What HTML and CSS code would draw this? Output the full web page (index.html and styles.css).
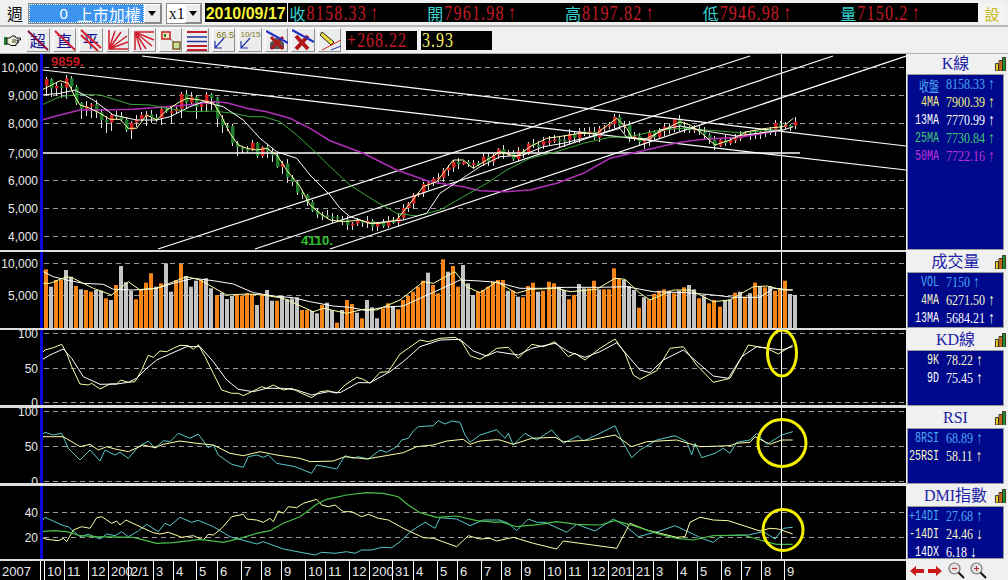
FILE: index.html
```html
<!DOCTYPE html>
<html lang="zh-Hant">
<head>
<meta charset="utf-8">
<title>上市加權 週線</title>
<link rel="stylesheet" href="styles.css">
</head>
<body>
<div class="app">
  <header class="row-quote">
    <button class="btn-period">週</button>
    <div class="combo combo-stock"><span class="combo-field"><span class="stock-no">0</span>上市加權</span><span class="combo-drop"><i class="tri"></i></span></div>
    <div class="combo combo-scale"><span class="combo-field">x1</span><span class="combo-drop"><i class="tri"></i></span></div>
    <div class="date-box">2010/09/17</div>
    <div class="quote-strip">
      <div class="quote"><span class="q-label">收</span><span class="q-num">8158.33</span><span class="q-up">↑</span></div>
      <div class="quote"><span class="q-label">開</span><span class="q-num">7961.98</span><span class="q-up">↑</span></div>
      <div class="quote"><span class="q-label">高</span><span class="q-num">8197.82</span><span class="q-up">↑</span></div>
      <div class="quote"><span class="q-label">低</span><span class="q-num">7946.98</span><span class="q-up">↑</span></div>
      <div class="quote"><span class="q-label">量</span><span class="q-num">7150.2</span><span class="q-up">↑</span></div>
    </div>
    <button class="btn-set">設</button>
  </header>

  <nav class="row-tools">
    <svg class="hand" viewBox="0 0 17 12"><path d="M0 2h3v8H0z" fill="#1f7a2a"/><path d="M3 3h3l2-2h3l1 2h4.500v2H13v1h1.500v1.500H13V9h-1v1.500H6.500L5 9H3z" fill="#f2f2d8" stroke="#111" stroke-width="1"/><path d="M8 5h4M8 7h4" stroke="#111" stroke-width=".8"/></svg>
    <div class="tool-group">
      <button class="tool"><span class="tool-char c-navy">超</span><svg viewBox="0 0 22 22"><path d="M1 2 21 21" stroke="#8a1040" stroke-width="2"/></svg></button>
      <button class="tool"><span class="tool-char c-navy">直</span><svg viewBox="0 0 22 22"><path d="M1 2 21 21" stroke="#d02030" stroke-width="2"/></svg></button>
      <button class="tool"><span class="tool-char c-navy">平</span><svg viewBox="0 0 22 22"><path d="M1 1 21 19M1 6 18 22" stroke="#d02030" stroke-width="2"/></svg></button>
      <button class="tool"><svg viewBox="0 0 22 22"><path d="M2 1V20H21M2 20 8 2M2 20 14 3M2 20 20 7M2 20 21 13" stroke="#d02030" stroke-width="1.5" fill="none"/></svg></button>
      <button class="tool"><svg viewBox="0 0 22 22"><path d="M2 21V3H21M2 3 8 21M2 3 13 20M2 3 19 17M2 3 21 11" stroke="#d02030" stroke-width="1.5" fill="none"/></svg></button>
      <button class="tool"><svg viewBox="0 0 22 22"><path d="M8 8 16 15" stroke="#3030a0" stroke-dasharray="2 1"/><rect x="2" y="3" width="8" height="7" fill="#f4e8c0" stroke="#c02020" stroke-width="1.5"/><rect x="4" y="5" width="2" height="3" fill="#208030"/><rect x="13" y="13" width="7" height="7" fill="#c8e0a0" stroke="#806020" stroke-width="1.5"/></svg></button>
      <button class="tool"><svg viewBox="0 0 22 22"><path d="M1 3H21M1 17H21" stroke="#c02030" stroke-width="2"/><path d="M1 8H21M1 12.500H21" stroke="#2030a0" stroke-width="1.500"/><path d="M1 21H21" stroke="#c02030" stroke-width="2"/></svg></button>
      <button class="tool"><span class="tool-note tool-note-lg">66.5</span><svg viewBox="0 0 22 22"><path d="M11 9 2 19M2 12V19H9" stroke="#2030b0" stroke-width="1.200" fill="none"/></svg></button>
      <button class="tool"><span class="tool-note">10/15</span><svg viewBox="0 0 22 22"><path d="M11 9 2 19M2 12V19H9" stroke="#2030b0" stroke-width="1.200" fill="none"/></svg></button>
      <button class="tool"><svg viewBox="0 0 22 22"><path d="M4 14 11 8l7 6v6H4z" fill="#555"/><path d="M5 8 17 20M17 8 5 20" stroke="#b01818" stroke-width="3"/><path d="M0 2 22 14" stroke="#2030c0" stroke-width="2"/></svg></button>
      <button class="tool"><svg viewBox="0 0 22 22"><path d="M4 7 16 20M16 7 4 20" stroke="#b01818" stroke-width="4"/><path d="M0 1 22 13" stroke="#2030c0" stroke-width="2"/></svg></button>
      <button class="tool"><svg viewBox="0 0 22 22"><path d="M3 3 15 13l-3 3L1 6z" fill="#f0e040" stroke="#222"/><path d="M3 21 22 11" stroke="#d02020"/><path d="M12 21 22 17" stroke="#2030c0"/></svg></button>
    </div>
    <div class="stat-box stat-change"><span class="stat-num">+268.22</span></div>
    <div class="stat-box stat-pct"><span class="stat-num">3.93</span></div>
  </nav>

  <main class="panes">
    <section class="pane pane-main">
      <svg class="chart" id="chart-main" viewBox="0 54 906 196"></svg>
      <aside class="side">
        <div class="side-head">K線<svg class="mini-bars" viewBox="0 0 11 14"><path d="M.5 6.500h3V14h-3zM4 3.500h3V14H4zM7.500.5h3V14h-3z" stroke="#111" stroke-width=".8" fill="#e8c828"/><path d="M8 1h2v13H8z" fill="#20902a"/><path d="M4.500 4h2v10h-2z" fill="#d06018"/></svg></div>
        <div class="side-box">
          <div class="val c-sky"><span class="val-name">收盤</span><span class="val-num">8158.33</span><span class="val-arrow">↑</span></div>
          <div class="val c-yellow"><span class="val-name">4MA</span><span class="val-num">7900.39</span><span class="val-arrow">↑</span></div>
          <div class="val c-white"><span class="val-name">13MA</span><span class="val-num">7770.99</span><span class="val-arrow">↑</span></div>
          <div class="val c-green"><span class="val-name">25MA</span><span class="val-num">7730.84</span><span class="val-arrow">↑</span></div>
          <div class="val c-purple"><span class="val-name">50MA</span><span class="val-num">7722.16</span><span class="val-arrow">↑</span></div>
        </div>
      </aside>
    </section>

    <section class="pane pane-vol">
      <svg class="chart" id="chart-vol" viewBox="0 252 906 76"></svg>
      <aside class="side">
        <div class="side-head">成交量<svg class="mini-bars" viewBox="0 0 11 14"><path d="M.5 6.500h3V14h-3zM4 3.500h3V14H4zM7.500.5h3V14h-3z" stroke="#111" stroke-width=".8" fill="#e8c828"/><path d="M8 1h2v13H8z" fill="#20902a"/><path d="M4.500 4h2v10h-2z" fill="#d06018"/></svg></div>
        <div class="side-box">
          <div class="val c-sky"><span class="val-name">VOL</span><span class="val-num">7150</span><span class="val-arrow">↑</span></div>
          <div class="val c-pale"><span class="val-name">4MA</span><span class="val-num">6271.50</span><span class="val-arrow">↑</span></div>
          <div class="val c-white"><span class="val-name">13MA</span><span class="val-num">5684.21</span><span class="val-arrow">↑</span></div>
        </div>
      </aside>
    </section>

    <section class="pane pane-kd">
      <svg class="chart" id="chart-kd" viewBox="0 330 906 75"></svg>
      <aside class="side">
        <div class="side-head">KD線<svg class="mini-bars" viewBox="0 0 11 14"><path d="M.5 6.500h3V14h-3zM4 3.500h3V14H4zM7.500.5h3V14h-3z" stroke="#111" stroke-width=".8" fill="#e8c828"/><path d="M8 1h2v13H8z" fill="#20902a"/><path d="M4.500 4h2v10h-2z" fill="#d06018"/></svg></div>
        <div class="side-box">
          <div class="val c-pale"><span class="val-name">9K</span><span class="val-num">78.22</span><span class="val-arrow">↑</span></div>
          <div class="val c-white"><span class="val-name">9D</span><span class="val-num">75.45</span><span class="val-arrow">↑</span></div>
        </div>
      </aside>
    </section>

    <section class="pane pane-rsi">
      <svg class="chart" id="chart-rsi" viewBox="0 408 906 75"></svg>
      <aside class="side">
        <div class="side-head">RSI<svg class="mini-bars" viewBox="0 0 11 14"><path d="M.5 6.500h3V14h-3zM4 3.500h3V14H4zM7.500.5h3V14h-3z" stroke="#111" stroke-width=".8" fill="#e8c828"/><path d="M8 1h2v13H8z" fill="#20902a"/><path d="M4.500 4h2v10h-2z" fill="#d06018"/></svg></div>
        <div class="side-box">
          <div class="val c-sky"><span class="val-name">8RSI</span><span class="val-num">68.89</span><span class="val-arrow">↑</span></div>
          <div class="val c-pale"><span class="val-name">25RSI</span><span class="val-num">58.11</span><span class="val-arrow">↑</span></div>
        </div>
      </aside>
    </section>

    <section class="pane pane-dmi">
      <svg class="chart" id="chart-dmi" viewBox="0 486 906 73"></svg>
      <aside class="side">
        <div class="side-head">DMI指數<svg class="mini-bars" viewBox="0 0 11 14"><path d="M.5 6.500h3V14h-3zM4 3.500h3V14H4zM7.500.5h3V14h-3z" stroke="#111" stroke-width=".8" fill="#e8c828"/><path d="M8 1h2v13H8z" fill="#20902a"/><path d="M4.500 4h2v10h-2z" fill="#d06018"/></svg></div>
        <div class="side-box">
          <div class="val c-sky"><span class="val-name">+14DI</span><span class="val-num">27.68</span><span class="val-arrow">↑</span></div>
          <div class="val c-pale"><span class="val-name">-14DI</span><span class="val-num">24.46</span><span class="val-arrow">↓</span></div>
          <div class="val c-white"><span class="val-name">14DX</span><span class="val-num">6.18</span><span class="val-arrow">↓</span></div>
        </div>
      </aside>
    </section>

    <footer class="pane pane-axis">
      <svg class="axis" id="chart-axis" viewBox="0 561 906 19"></svg>
      <div class="nav-icons">
        <svg viewBox="0 0 14 10" class="nav-arrow"><path d="M0 5 6 0v3h8v4H6v3z" fill="#c81818"/></svg>
        <svg viewBox="0 0 14 10" class="nav-arrow"><path d="M14 5 8 0v3H0v4h8v3z" fill="#c81818"/></svg>
        <svg viewBox="0 0 17 17" class="nav-zoom"><circle cx="6.500" cy="6.500" r="5.500" fill="#e8e0e0" stroke="#777" stroke-width="1.200"/><path d="M4 6.500H9" stroke="#b03030" stroke-width="1.200"/><path d="M10.500 10.500 16 16" stroke="#111" stroke-width="2"/></svg>
        <svg viewBox="0 0 17 17" class="nav-zoom"><circle cx="6.500" cy="6.500" r="5.500" fill="#e8e0e0" stroke="#777" stroke-width="1.200"/><path d="M4 6.500H9M6.500 4V9" stroke="#b03030" stroke-width="1.200"/><path d="M10.500 10.500 16 16" stroke="#111" stroke-width="2"/></svg>
      </div>
    </footer>
  </main>
</div>
<script src="chart.js"></script>
</body>
</html>
```
FILE: styles.css
```css
* { box-sizing: border-box; }
html, body { margin: 0; padding: 0; }
body { width: 1008px; height: 580px; overflow: hidden; background: #f0f0f0; font-family: "Liberation Serif", "Noto Sans CJK TC", serif; }
button { font: inherit; padding: 0; margin: 0; }
.app { display: flex; flex-direction: column; width: 1008px; height: 580px; }

/* quote row */
.row-quote { display: flex; align-items: stretch; height: 27px; padding: 3px 3px 3px 5px; border-bottom: 2px solid #b8b8b8; }
.btn-period { width: 20px; background: #f0f0f0; border: 0; font-family: "Noto Sans CJK TC", sans-serif; font-size: 16px; line-height: 18px; color: #111; }
.combo { display: flex; height: 21px; border: 1px solid #8a8a8a; background: #fff; }
.combo-stock { width: 134px; margin-left: 3px; }
.combo-scale { width: 36px; margin-left: 4px; }
.combo-field { flex: 1; display: flex; align-items: center; font-family: "Noto Sans CJK TC", sans-serif; font-size: 16px; line-height: 18px; }
.combo-stock .combo-field { background: #3c94ee; color: #fff; outline: 1px dotted #fff; outline-offset: -1px; justify-content: flex-end; padding-right: 3px; }
.combo-scale .combo-field { font-family: "Liberation Serif", serif; padding-left: 2px; color: #111; }
.stock-no { margin-right: 9px; font-family: "Liberation Sans", sans-serif; font-size: 15px; }
.combo-drop { display: flex; align-items: center; justify-content: center; width: 17px; background: #ececec; border: 1px solid; border-color: #fff #888 #888 #fff; }
.tri { width: 0; height: 0; border: 4px solid transparent; border-top: 5px solid #000; border-bottom: 0; }
.date-box { width: 82px; margin-left: 3px; background: #000; color: #f6f23a; font-family: "Liberation Sans", sans-serif; font-weight: 700; font-size: 16px; line-height: 21px; text-align: center; }
.quote-strip { display: grid; grid-template-columns: repeat(5, 137.700px); width: 691px; margin-left: 1px; padding-left: 2px; background: #000; }
.quote { display: flex; align-items: center; color: #c81c26; }
.q-label { width: 17px; color: #38d4d4; font-family: "Noto Sans CJK TC", sans-serif; font-size: 16px; line-height: 20px; }
.q-num { font-family: "Liberation Serif", serif; font-size: 16px; letter-spacing: 1.200px; transform: scaleY(1.300); }
.q-up { margin-left: 3px; font-size: 16px; font-family: "Liberation Serif", serif; transform: scaleY(1.300); }
.btn-set { width: 26px; margin-left: 1px; background: #f4f4f0; border: 0; color: #c8b820; font-family: "Noto Sans CJK TC", sans-serif; font-size: 15px; }

/* tools row */
.row-tools { display: flex; align-items: center; height: 27px; padding-left: 4px; border-bottom: 1px solid #b0b0b0; }
.hand { width: 17px; height: 12px; margin-top: 2px; }
.tool-group { display: flex; gap: 3px; margin-left: 5px; }
.tool { position: relative; width: 23.500px; height: 24px; background: #ececec; border: 1px solid; border-color: #fff #909090 #909090 #fff; }
.tool svg { position: absolute; left: 0; top: 0; width: 22px; height: 22px; }
.tool-char { display: block; font-family: "Noto Sans CJK TC", sans-serif; font-size: 16px; line-height: 22px; }
.c-navy { color: #15159a; }
.tool-note { position: absolute; right: 0; top: 1px; font-family: "Liberation Sans", sans-serif; font-size: 8px; color: #7a7a20; }
.tool-note-lg { font-size: 9px; }
.stat-box { display: flex; align-items: center; width: 71px; height: 19px; margin-left: 5px; background: #000; padding-left: 1px; font-family: "Liberation Serif", serif; font-size: 16px; letter-spacing: 1px; }
.stat-num { display: block; line-height: 15px; transform: scaleY(1.250); }
.stat-change { color: #c81c26; }
.stat-pct { color: #f4f060; margin-left: 4px; }

/* panes */
.panes { flex: 1; display: flex; flex-direction: column; min-height: 0; }
.pane { display: flex; width: 1008px; }
.pane-main { height: 198px; }
.pane-vol { height: 78px; }
.pane-kd { height: 78px; }
.pane-rsi { height: 78px; }
.pane-dmi { height: 75px; }
.pane-axis { height: 19px; }
.chart { display: block; flex: none; width: 906px; background: #000; border-bottom: 2px solid #dcdcdc; }
.pane-main .chart { height: 198px; }
.pane-vol .chart { height: 78px; }
.pane-kd .chart, .pane-rsi .chart { height: 78px; border-bottom-width: 3px; }
.pane-dmi .chart { height: 75px; }
.axis { display: block; flex: none; width: 906px; height: 19px; background: #000; }

.side { flex: 1; display: flex; flex-direction: column; padding: 0 4px 2px 1px; }
.side-head { position: relative; height: 20px; font-size: 16px; line-height: 20px; text-align: center; color: #2222a8; font-family: "Liberation Serif", "Noto Sans CJK TC", serif; }
.mini-bars { position: absolute; right: -2px; top: 3px; width: 11px; height: 14px; }
.side-box { flex: 1; background: #00088c; border: 1px solid #9a9a9a; min-height: 0; overflow: hidden; }
.val { display: flex; align-items: center; height: 18px; font-family: "Liberation Serif", "Noto Sans CJK TC", serif; font-size: 12px; }
.val-name { width: 31px; text-align: right; margin-right: 7px; white-space: nowrap; font-family: "Liberation Mono", "Noto Sans CJK TC", monospace; font-size: 10px; transform: scaleY(1.400); }
.val-num { transform: scaleY(1.250); }
.val-arrow { margin-left: 3px; font-size: 13px; transform: scaleY(1.250); }
.c-sky { color: #4aa8f4; }
.c-yellow { color: #f4f080; }
.c-pale { color: #f8f8c8; }
.c-white { color: #fff; }
.c-green { color: #40c870; }
.c-purple { color: #c030d8; }

.nav-icons { flex: 1; display: flex; align-items: center; padding-left: 4px; }
.nav-arrow { width: 14px; height: 10px; margin-right: 4px; }
.nav-zoom { width: 17px; height: 17px; margin-left: 2px; margin-right: 3px; }

/* chart marks */
.grid { stroke: #9a9a9a; stroke-width: 1; stroke-dasharray: 5 4; shape-rendering: crispEdges; }
.blue-rule { stroke: #0808d8; stroke-width: 3; shape-rendering: crispEdges; }
.cross { stroke: #fff; stroke-width: 1; shape-rendering: crispEdges; }
.trend { stroke: #fff; stroke-width: 1.200; fill: none; }
.solid-7000 { stroke: #fff; stroke-width: 1.500; }
.line { fill: none; stroke-width: 1; }
.l-yellow { stroke: #ffffa8; }
.l-white { stroke: #fff; }
.l-green { stroke: #3aa83a; }
.l-purple { stroke: #b030b8; stroke-width: 1.500; }
.l-cyan { stroke: #58c8c8; }
.l-dmi-green { stroke: #48c048; stroke-width: 1.200; }
.wick { stroke: #e0e0e0; stroke-width: 1; shape-rendering: crispEdges; }
.up { fill: #d81f20; }
.down { fill: #1f7d2c; }
.vol-o { fill: #f58518; }
.vol-g { fill: #c4c4c4; }
.ring { fill: none; stroke: #f4f000; stroke-width: 3; }
.y-label { fill: #e8e8e8; font-family: "Liberation Sans", sans-serif; font-size: 12px; text-anchor: end; }
.hi-label { fill: #c01c20; font-family: "Liberation Sans", sans-serif; font-weight: 700; font-size: 13px; }
.lo-label { fill: #30c030; font-family: "Liberation Sans", sans-serif; font-weight: 700; font-size: 13px; }
.x-label { fill: #e8e8e8; font-family: "Liberation Sans", sans-serif; font-size: 13px; }
.x-tick { stroke: #fff; stroke-width: 1; shape-rendering: crispEdges; }
```
FILE: chart.js
```js
(function () {
var NS = "http://www.w3.org/2000/svg";
function el(parent, tag, cls, attrs) {
  var e = document.createElementNS(NS, tag);
  if (cls) e.setAttribute("class", cls);
  for (var k in attrs) e.setAttribute(k, attrs[k]);
  parent.appendChild(e);
  return e;
}
function tr(ox, oy, a) { // traced crop coordinates (3x) to page coordinates
  var out = [];
  for (var i = 0; i < a.length; i += 2) out.push([ox + a[i] / 3, oy + a[i + 1] / 3]);
  return out;
}
function poly(svg, cls, pts) {
  el(svg, "polyline", "line " + cls, { points: pts.map(function (p) { return p[0].toFixed(1) + "," + p[1].toFixed(1); }).join(" ") });
}
function frame(id, grid, labels) {
  var svg = document.getElementById(id);
  grid.forEach(function (y) { el(svg, "line", "grid", { x1: 44, x2: 906, y1: y + .5, y2: y + .5 }); });
  labels.forEach(function (l) {
    var t = el(svg, "text", "y-label", { x: 38, y: l[1] + 4.5 });
    t.textContent = l[0];
  });
  return svg;
}
function finish(svg, y1, y2) {
  el(svg, "line", "blue-rule", { x1: 41.5, x2: 41.5, y1: y1, y2: y2 });
  el(svg, "line", "cross", { x1: 781.5, x2: 781.5, y1: y1, y2: y2 });
}

/* ---------- price pane ---------- */
var m = frame("chart-main", [67, 95, 123, 180, 208, 236],
  [["10,000", 67], ["9,000", 95], ["8,000", 123], ["7,000", 153], ["6,000", 180], ["5,000", 208], ["4,000", 236]]);

var ma4 = tr(0, 50, [125,120,155,105,180,92,205,100,225,140,240,165,270,175,300,190,330,208,360,208,385,235,410,235,440,195,470,210,500,180,540,155,560,145,600,150,640,158,665,200,690,250,715,285,740,295,770,300,800,295,830,315,860,360,900,410,930,465,960,490,990,510])
  .concat(tr(330, 50, [40,515,90,510,120,520,150,520,200,510,240,460,280,410,320,395,370,330,400,330,430,355,470,330,510,305,560,320,600,290,650,265,700,258,750,250,800,250,860,205,890,235,905,262,940,270,990,245]))
  .concat(tr(660, 50, [60,215,90,225,120,245,165,285,210,270,260,245,320,235,370,230,400,205]));
var ma13 = tr(0, 50, [125,135,180,130,225,120,280,150,340,195,410,210,470,210,510,200,570,170,610,155,670,170,730,210,780,265,830,305,890,325,930,375,990,435])
  .concat(tr(330, 50, [30,475,60,500,120,520,220,510,290,490,330,430,390,390,450,350,510,320,580,315,640,290,700,280,800,255,870,235,890,262,960,268,990,240]))
  .concat(tr(660, 50, [60,228,130,242,230,258,370,240,400,230]));
var ma25 = tr(0, 50, [125,165,180,140,240,133,300,135,350,150,390,163,450,165,500,175,570,185,640,183,700,190,750,200,790,200,840,215,890,255,950,310,990,350])
  .concat(tr(330, 50, [60,405,130,450,200,490,260,498,330,480,400,440,470,400,530,360,600,325,680,305,760,280,840,262,900,260,990,240]))
  .concat(tr(660, 50, [70,235,140,240,240,248,370,238]));
var ma50 = tr(0, 50, [125,210,180,195,240,180,300,180,400,178,480,172,560,165,640,155,680,158,740,175,800,185,870,205,930,235,990,272])
  .concat(tr(330, 50, [100,310,200,360,300,395,400,410,450,422,530,425,600,420,680,400,760,370,840,325,990,290]))
  .concat(tr(660, 50, [60,277,130,268,240,262,370,240]));

function at(pts, x) {
  for (var i = 1; i < pts.length; i++) {
    if (x <= pts[i][0]) {
      var a = pts[i - 1], b = pts[i];
      return a[1] + (b[1] - a[1]) * (x - a[0]) / (b[0] - a[0] || 1);
    }
  }
  return pts[pts.length - 1][1];
}
var seed = 17;
function rnd() { seed = (seed * 16807) % 2147483647; return seed / 2147483647; }

var STEP = 5.03, X0 = 43.5, prevY = at(ma4, 50);
for (var i = 0; i < 150; i++) {
  var cx = X0 + STEP * i;
  var spread = cx < 300 ? 15 : 9;
  var closeY = at(ma4, Math.min(cx + 5, 786)) + (rnd() - .5) * spread;
  var bodyTop = Math.min(prevY, closeY), bodyH = Math.max(Math.abs(closeY - prevY), 2);
  el(m, "line", "wick", { x1: Math.round(cx) + 2.5, x2: Math.round(cx) + 2.5, y1: bodyTop - 1 - rnd() * 4, y2: bodyTop + bodyH + 1 + rnd() * (cx < 300 ? 11 : 5) });
  el(m, "rect", closeY < prevY ? "up" : "down", { x: Math.round(cx) + 1, y: bodyTop, width: 3.5, height: bodyH });
  prevY = closeY;
}
[[142, 56, 906, 146], [43, 70, 906, 170], [158, 249, 750, 56], [255, 249, 833, 56], [330, 249, 906, 56]].forEach(function (l) {
  el(m, "line", "trend", { x1: l[0], y1: l[1], x2: l[2], y2: l[3] });
});
el(m, "line", "trend solid-7000", { x1: 43, y1: 153, x2: 800, y2: 153 });
poly(m, "l-purple", ma50);
poly(m, "l-green", ma25);
poly(m, "l-white", ma13);
poly(m, "l-yellow", ma4);
el(m, "text", "hi-label", { x: 51, y: 66 }).textContent = "9859.";
el(m, "text", "lo-label", { x: 301, y: 245 }).textContent = "4110.";
finish(m, 54, 250);

/* ---------- volume pane ---------- */
var v = frame("chart-vol", [263, 295], [["10,000", 263], ["5,000", 295]]);
var bars = "o58 g110 o90 o90 g60 g80 o108 g118 o120 o125 g120 g122 o145 g150 o105 g48 g97 g122 o148 o120 o98 o70 g110 o100 g40 g125 o90 o42 g78 g110 g92 o90 g85 g115 o135 g128 g147 g138 o135 o137 o130 o132 g165 o135 g120 g152 o152 g138 g148 g145 g142 o180 o180 g183 g190 o165 g158 g180 o218 g180 o150 o162 g188 o205 g150 g172 g205 o175 o160 g168 o178 o150 o138 o125 o110 o92 g68 o105 o130 o28 g65 o48 o110 g45 g100 g135 o125 o120 o110 o95 o90 o90 g122 o122 g140 o142 o108 o98 g125 o122 o95 o100 g110 g120 o148 o135 g102 g115 o115 o92 g118 o118 o118 o55 o85 g90 g108 g120 o173 g142 o148 o132 o122 o118 g122 o130 g122 o112 g105 g118 o145 g140 o160 o150 o170 g150 g148 o128 g125 o140 g130 o98 g108 o112 g108 o122 o115 o92 g132 g135".split(" ");
bars.forEach(function (b, i) {
  var y = 250 + parseInt(b.slice(1), 10) / 3;
  el(v, "rect", b[0] === "o" ? "vol-o" : "vol-g", { x: Math.round(X0 + STEP * i), y: y.toFixed(1), width: 4, height: (328 - y).toFixed(1) });
});
poly(v, "l-white", tr(0, 250, [130,65,160,80,200,90,250,100,310,103,340,118,400,120,470,115,520,100,580,85,640,92,700,102,760,128,820,138,880,143,930,155,1000,168,1050,172,1100,182,1150,172,1210,168,1260,145,1320,118,1380,90,1440,93,1490,97])
  .concat(tr(500, 250, [60,115,130,115,200,112,300,112,380,110,460,125,560,128,640,135,700,142,780,142,820,115,878,120])));
poly(v, "l-yellow", tr(0, 250, [130,100,150,100,200,80,220,85,280,115,335,135,385,95,420,120,470,115,560,80,600,90,680,135,740,132,790,135,850,145,940,185,970,175,1040,190,1090,178,1130,180,1200,150,1270,95,1300,100,1365,65,1400,110,1440,128,1490,95])
  .concat(tr(500, 250, [50,130,90,118,170,115,210,125,290,118,345,85,375,88,420,130,450,150,520,120,570,120,640,155,690,150,760,110,800,108,850,120,878,120])));
finish(v, 252, 328);

/* ---------- KD pane ---------- */
var kd = frame("chart-kd", [333, 368, 402], [["100", 333], ["50", 368], ["0", 402]]);
poly(kd, "l-yellow", tr(0, 250, [125,310,135,300,160,293,185,283,200,310,215,350,240,402,265,405,275,400,300,417,330,402,350,402,362,390,385,397,405,395,425,360,445,316,460,322,480,303,500,305,520,295,540,286,565,287,580,298,595,284,615,320,640,370,665,420,695,430,715,430,730,437,755,425,785,410,800,415,820,405,850,420,875,415,905,430,935,443,960,425,985,422,1010,430,1035,405,1070,382,1090,388,1110,400,1140,367,1165,365,1200,312,1225,295,1260,270,1285,275,1320,265,1365,262,1385,275,1410,317,1440,328,1470,310,1490,295])
  .concat(tr(500, 250, [25,292,55,325,95,283,130,290,165,275,205,320,225,310,255,330,300,295,345,267,375,310,400,375,420,388,470,362,510,295,550,290,590,345,640,397,690,385,745,285,800,295,835,312,878,285])));
poly(kd, "l-white", tr(0, 250, [125,330,150,315,190,297,215,325,250,380,300,403,350,402,385,397,410,385,440,355,470,330,510,312,560,290,600,290,640,335,680,390,715,418,760,425,800,415,850,415,890,420,935,435,985,425,1020,428,1075,398,1110,398,1170,365,1210,335,1260,290,1320,270,1380,268,1420,303,1460,318,1490,305])
  .concat(tr(500, 250, [55,315,95,295,165,280,205,305,255,322,300,305,350,278,420,360,450,368,490,330,550,300,590,335,640,378,685,385,725,320,770,290,845,300,878,290])));
finish(kd, 330, 405);
el(kd, "ellipse", "ring", { cx: 782, cy: 353, rx: 14.5, ry: 23 });

/* ---------- RSI pane ---------- */
var rsi = frame("chart-rsi", [411, 446, 481], [["100", 411], ["50", 446], ["0", 481]]);
poly(rsi, "l-cyan", tr(0, 405, [125,90,135,82,160,90,185,85,205,130,240,165,270,135,300,168,315,135,345,150,360,142,385,160,415,125,445,108,465,130,490,107,510,110,535,85,570,100,595,87,625,128,640,120,655,150,695,178,730,187,745,155,770,150,790,157,805,150,830,175,885,185,935,205,950,180,1010,192,1035,152,1060,160,1075,155,1105,162,1140,135,1160,142,1190,125,1205,105,1225,100,1240,78,1255,65,1300,62,1315,47,1335,57,1355,48,1380,52,1395,90,1410,112,1440,90,1490,74])
  .concat(tr(500, 405, [0,85,15,100,25,85,40,120,75,85,110,105,155,75,190,115,235,92,250,108,300,85,345,62,365,105,395,158,420,135,470,105,525,92,560,110,575,150,585,115,605,158,645,145,670,130,690,145,710,112,750,105,770,85,800,118,845,90,878,80])));
poly(rsi, "l-yellow", tr(0, 405, [125,95,160,95,190,95,240,125,270,118,295,135,320,125,345,132,385,140,430,120,465,128,490,118,540,108,590,115,640,120,690,145,730,152,780,140,830,150,900,160,930,170,1000,168,1035,155,1100,162,1140,155,1210,143,1250,125,1300,120,1340,108,1390,103,1410,118,1440,108,1490,104])
  .concat(tr(500, 405, [0,105,40,118,95,100,165,97,190,110,270,105,345,90,395,125,440,110,530,105,600,125,690,122,710,115,750,112,765,95,810,118,845,105,878,105])));
finish(rsi, 408, 483);
el(rsi, "ellipse", "ring", { cx: 782, cy: 443, rx: 24, ry: 23.5 });

/* ---------- DMI pane ---------- */
var dmi = frame("chart-dmi", [512, 537], [["40", 512], ["20", 537]]);
poly(dmi, "l-cyan", tr(0, 405, [125,350,135,337,190,362,205,365,240,395,265,388,300,402,320,387,345,392,365,380,385,395,415,378,440,358,475,380,495,355,510,362,540,337,575,352,595,346,640,365,690,395,770,417,790,410,850,432,945,450,965,442,1005,445,1040,440,1065,445,1085,435,1115,435,1145,427,1175,428,1200,410,1235,377,1275,352,1305,370,1320,338,1370,342,1410,362,1450,345,1490,345])
  .concat(tr(500, 405, [0,345,25,355,50,377,85,342,110,352,135,352,200,382,230,358,285,378,340,342,375,362,415,395,480,378,525,362,560,378,610,402,640,412,665,392,745,390,790,380,825,402,850,370,878,367])));
poly(dmi, "l-yellow", tr(0, 405, [125,397,140,403,175,407,190,400,200,410,220,375,245,365,270,370,290,338,305,335,335,355,350,348,360,360,378,345,420,365,460,383,480,387,505,382,545,397,580,392,610,405,625,388,640,390,665,370,695,335,730,328,740,342,770,345,790,352,810,340,820,350,835,318,850,325,865,305,890,308,910,295,950,283,965,300,985,305,1005,300,1030,320,1055,320,1085,335,1105,328,1135,340,1165,345,1210,370,1270,398,1300,400,1370,425,1405,392,1440,402,1470,400,1490,408])
  .concat(tr(500, 405, [40,397,100,415,170,432,190,408,350,430,390,355,440,375,530,397,555,395,570,352,600,337,640,345,685,347,780,378,810,370,835,372,878,387])));
poly(dmi, "l-dmi-green", tr(0, 405, [125,380,160,377,200,380,240,392,290,395,400,397,470,415,520,413,600,403,670,412,720,400,770,385,810,377,850,355,900,335,950,298,980,283,1040,270,1100,263,1150,265,1195,275,1225,300,1260,323,1310,337,1370,333,1430,347,1490,352])
  .concat(tr(500, 405, [0,350,50,365,120,358,170,350,230,358,300,360,345,347,400,362,470,385,530,400,580,405,640,392,730,390,780,405,830,418,878,418])));
finish(dmi, 486, 559);
el(dmi, "ellipse", "ring", { cx: 783, cy: 530, rx: 20, ry: 20.5 });

/* ---------- time axis ---------- */
var ax = document.getElementById("chart-axis");
var tk = [[-1,"2007"],[40,""],[44,"10"],[64,"11"],[88,"12"],[108,"200"],[128,"2/1"],[153,"3"],[173,"4"],[196,"5"],[217,"6"],[241,"7"],[261,"8"],[281,"9"],[305,"10"],[325,"11"],[349,"12"],[369,"200"],[392,"31"],[413,"4"],[437,"5"],[457,"6"],[481,"7"],[501,"8"],[521,"9"],[544,"10"],[565,"11"],[588,"12"],[608,"201"],[633,"21"],[653,"3"],[677,"4"],[697,"5"],[721,"6"],[741,"7"],[761,"8"],[784,"9"]];
tk.forEach(function (t) {
  if (t[0] >= 0) {
    el(ax, "line", "x-tick", { x1: t[0] + .5, x2: t[0] + .5, y1: 561, y2: 580 });
  }
  if (t[1]) el(ax, "text", "x-label", { x: t[0] + 3, y: 576 }).textContent = t[1];
});
})();
```
